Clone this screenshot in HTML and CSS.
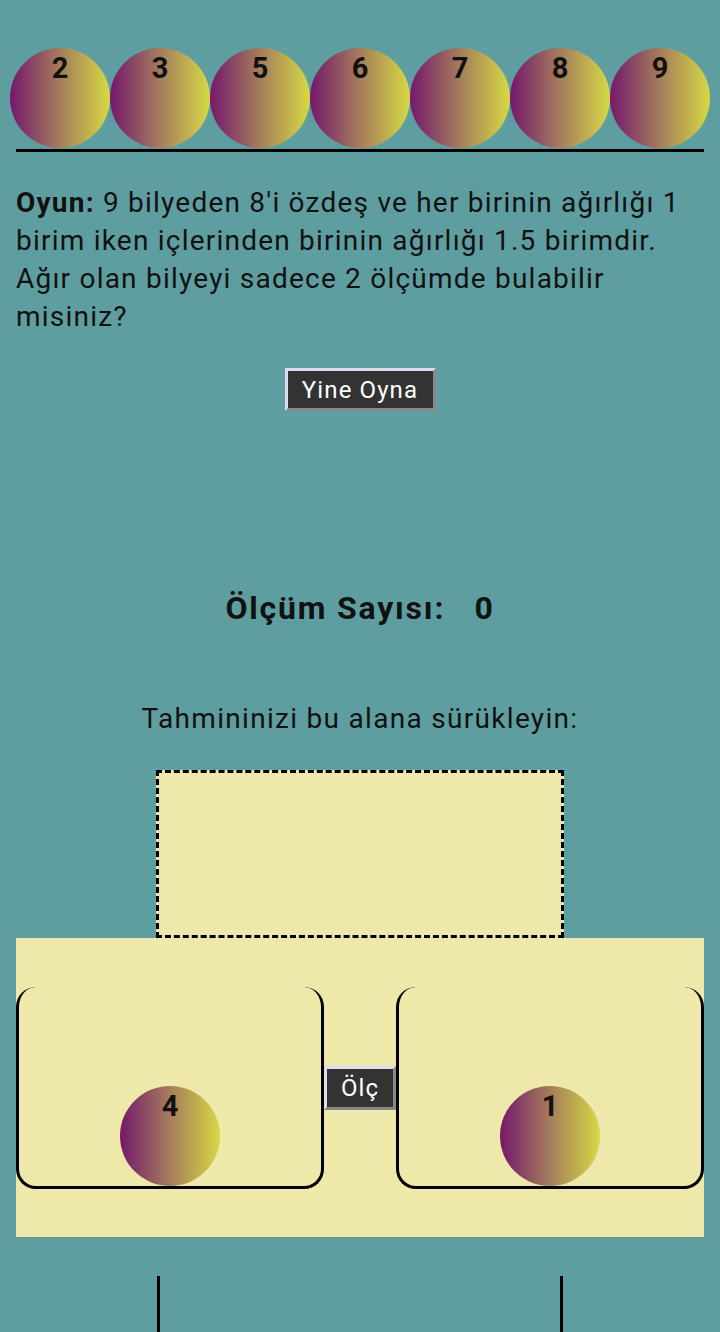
FILE: index.html
```html
<!DOCTYPE html>
<html lang="tr">
<head>
<meta charset="utf-8">
<link rel="stylesheet" href="styles.css">
</head>
<body>
<div class="balls">
  <div class="ball"><span>2</span></div>
  <div class="ball"><span>3</span></div>
  <div class="ball"><span>5</span></div>
  <div class="ball"><span>6</span></div>
  <div class="ball"><span>7</span></div>
  <div class="ball"><span>8</span></div>
  <div class="ball"><span>9</span></div>
</div>
<div class="rule"></div>
<p class="intro"><b>Oyun:</b> 9 bilyeden 8'i özdeş ve her birinin ağırlığı 1 birim iken içlerinden birinin ağırlığı 1.5 birimdir. Ağır olan bilyeyi sadece 2 ölçümde bulabilir misiniz?</p>
<div class="center"><button class="btn btn-big">Yine Oyna</button></div>
<h2 class="count">Ölçüm Sayısı:&nbsp;&nbsp; 0</h2>
<p class="hint">Tahmininizi bu alana sürükleyin:</p>
<div class="drop"></div>
<div class="scale">
  <div class="pan"><div class="ball"><span>4</span></div></div>
  <button class="btn btn-small">Ölç</button>
  <div class="pan"><div class="ball"><span>1</span></div></div>
</div>
<div class="legs"></div>
</body>
</html>
```
FILE: styles.css
```css
html, body {
  margin: 0;
  padding: 0;
}
body {
  background: #5f9ea0;
  font-family: Roboto, "Noto Sans", sans-serif;
  color: #111;
  padding: 0 16px;
  height: 1332px;
  box-sizing: border-box;
  overflow: hidden;
}
.balls {
  display: flex;
  justify-content: center;
  margin-top: 48px;
}
.ball {
  flex: none;
  width: 100px;
  height: 100px;
  border-radius: 50%;
  background: linear-gradient(to right, #75186b, #a57d5c 50%, #d6d944);
  display: flex;
  justify-content: center;
  box-sizing: border-box;
  padding-top: 4px;
}
.ball span {
  font-weight: bold;
  font-size: 29px;
  line-height: 32px;
  color: #111;
}
.rule {
  height: 3px;
  background: #000;
  margin-top: 1px;
}
.intro {
  margin: 32px 0 0;
  font-size: 28px;
  line-height: 38px;
  letter-spacing: 1.22px;
}
.center {
  display: flex;
  justify-content: center;
  margin-top: 32px;
}
.btn {
  background: #333;
  color: #fff;
  font-family: Roboto, "Noto Sans", sans-serif;
  letter-spacing: 1.1px;
  border: 3px solid;
  border-color: #dde #888 #888 #dde;
  margin: 0;
}
.btn-big {
  font-size: 24px;
  height: 43px;
  width: 151px;
  padding: 0;
}
.count {
  margin: 177px 0 0;
  text-align: center;
  font-size: 32px;
  line-height: 40px;
  font-weight: bold;
  letter-spacing: 1.8px;
}
.hint {
  margin: 72px 0 0;
  text-align: center;
  font-size: 28px;
  line-height: 38px;
  letter-spacing: 1.3px;
}
.drop {
  width: 408px;
  height: 168px;
  box-sizing: border-box;
  margin: 32px auto 0;
  border: 3px dashed #000;
  background: #eee8aa;
}
.scale {
  height: 299px;
  background: #eee8aa;
  display: flex;
  align-items: center;
}
.pan {
  width: 308px;
  height: 202px;
  box-sizing: border-box;
  border: 3px solid #000;
  border-top: none;
  border-radius: 20px;
  display: flex;
  align-items: flex-end;
  justify-content: center;
}
.btn-small {
  width: 72px;
  height: 44px;
  font-size: 24px;
  padding: 0;
  flex: none;
}
.legs {
  width: 406px;
  height: 60px;
  margin: 39px auto 0;
  border-left: 3px solid #000;
  border-right: 3px solid #000;
  box-sizing: border-box;
}
```
